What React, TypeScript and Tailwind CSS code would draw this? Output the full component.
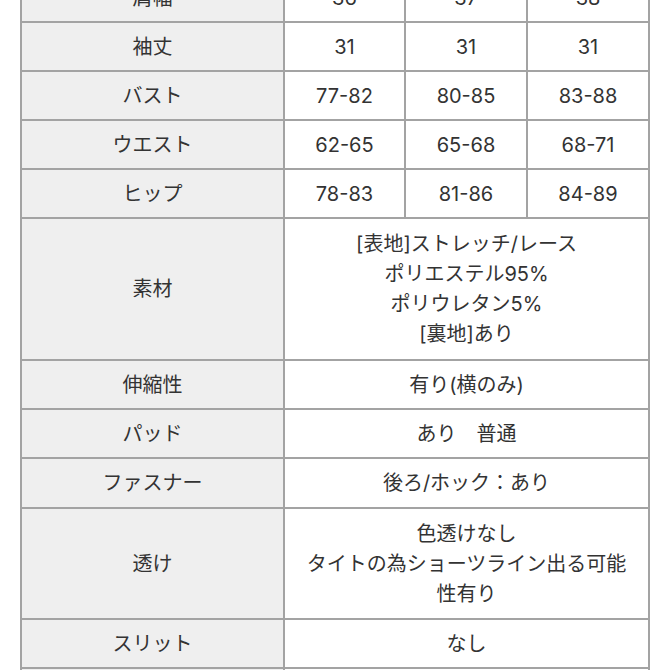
import React from "react";

// Size chart: S/M/L columns, then material rows that span all three sizes.
type SizeRow = { label: string; values: [string, string, string] };
type SpanRow = { label: string; lines: string[]; pad: string };

const sizeRows: SizeRow[] = [
  { label: "肩幅", values: ["36", "37", "38"] },
  { label: "袖丈", values: ["31", "31", "31"] },
  { label: "バスト", values: ["77-82", "80-85", "83-88"] },
  { label: "ウエスト", values: ["62-65", "65-68", "68-71"] },
  { label: "ヒップ", values: ["78-83", "81-86", "84-89"] },
];

const spanRows: SpanRow[] = [
  {
    label: "素材",
    lines: ["[表地]ストレッチ/レース", "ポリエステル95%", "ポリウレタン5%", "[裏地]あり"],
    pad: "py-[10px]",
  },
  { label: "伸縮性", lines: ["有り(横のみ)"], pad: "py-[8.5px]" },
  { label: "パッド", lines: ["あり　普通"], pad: "py-[8.5px]" },
  { label: "ファスナー", lines: ["後ろ/ホック：あり"], pad: "py-[9px]" },
  {
    label: "透け",
    lines: ["色透けなし", "タイトの為ショーツライン出る可能性有り"],
    pad: "py-[9.5px]",
  },
  { label: "スリット", lines: ["なし"], pad: "py-[8.5px]" },
  { label: "着丈", lines: ["88"], pad: "py-[8.5px]" },
];

const cell = "border-2 border-[#a3a3a3] text-center align-middle";

export default function App() {
  return (
    <div
      className="h-[670px] w-[670px] overflow-hidden bg-white text-[20px] leading-[30px] text-[#333333]"
      style={{ fontFamily: '"Inter", "Noto Sans CJK JP", sans-serif' }}
    >
      <table className="ml-[20px] mt-[-28px] w-[628px] table-fixed border-collapse">
        <colgroup>
          <col className="w-[263px]" />
          <col className="w-[121px]" />
          <col className="w-[122px]" />
          <col className="w-[122px]" />
        </colgroup>
        <tbody>
          {sizeRows.map((r) => (
            <tr key={r.label}>
              <td className={`${cell} px-3 py-[8.5px] bg-[#efefef]`}>{r.label}</td>
              {r.values.map((v, i) => (
                <td key={i} className={`${cell} px-2 py-[8.5px]`}>
                  {v}
                </td>
              ))}
            </tr>
          ))}
          {spanRows.map((r) => (
            <tr key={r.label}>
              <td className={`${cell} px-3 ${r.pad} bg-[#efefef]`}>{r.label}</td>
              <td colSpan={3} className={`${cell} px-4 ${r.pad}`}>
                {r.lines.map((l) => (
                  <div key={l}>{l}</div>
                ))}
              </td>
            </tr>
          ))}
        </tbody>
      </table>
    </div>
  );
}
